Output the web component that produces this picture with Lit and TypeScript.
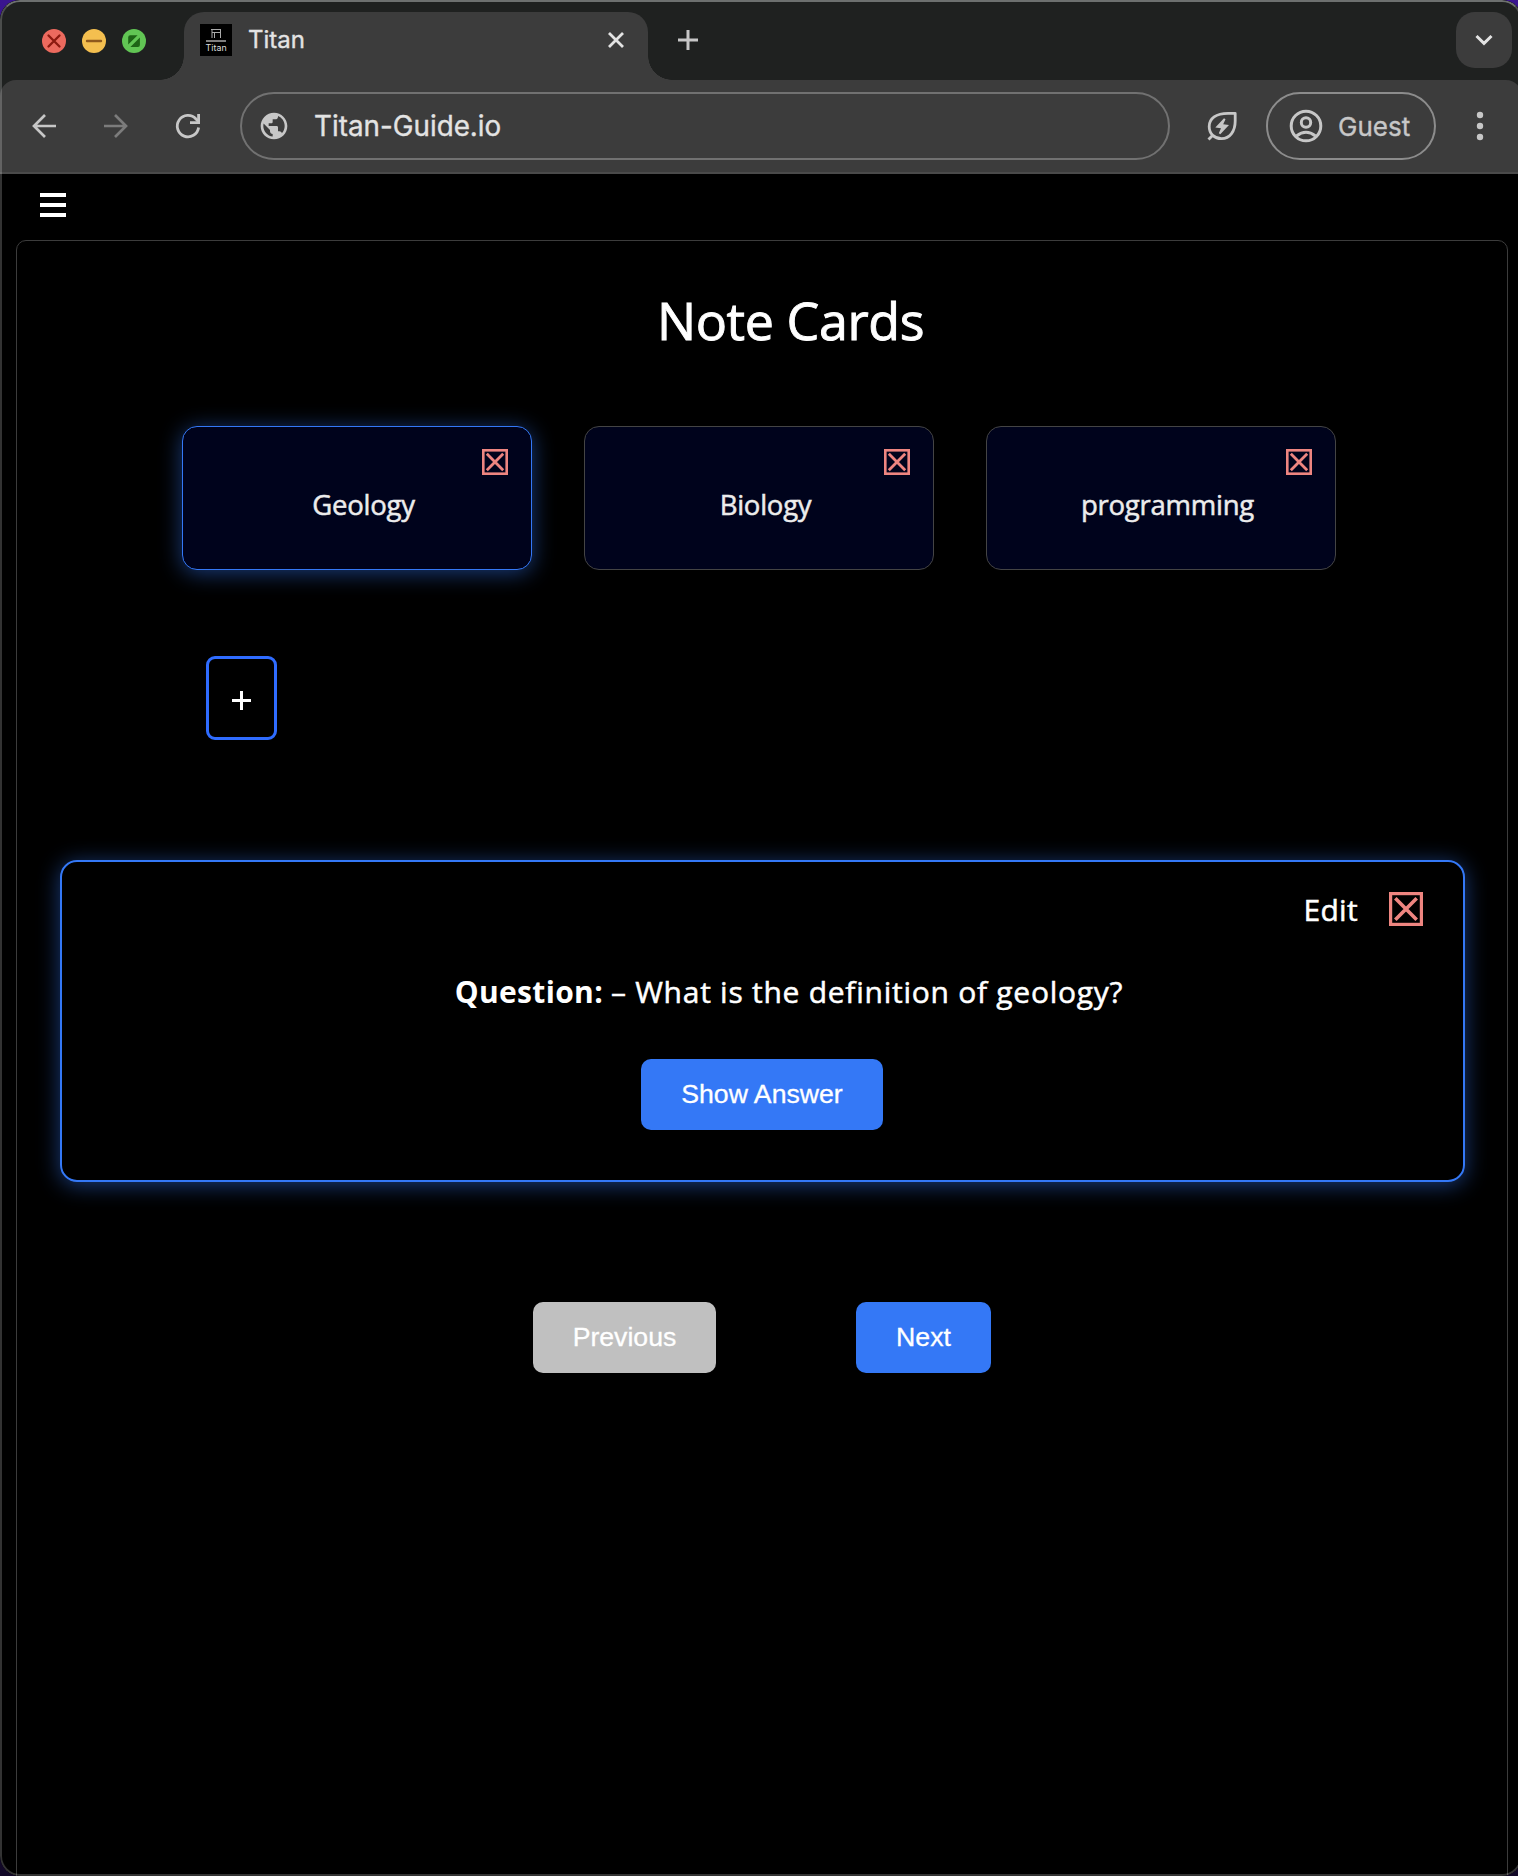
import { LitElement, html, css } from "lit";
import { customElement, property } from "lit/decorators.js";

@customElement("close-box")
class CloseBox extends LitElement {
  @property({ type: Boolean }) large = false;
  static styles = css`
    :host { display: block; line-height: 0; }
  `;
  render() {
    return this.large
      ? html`<svg width="34" height="34" viewBox="0 0 34 34" fill="none" stroke="#ee8580">
          <rect x="1.6" y="1.6" width="30.8" height="30.8" stroke-width="3.200" />
          <path d="M6.300 6.300L27.700 27.700M27.700 6.300L6.300 27.700" stroke-width="3.600" />
        </svg>`
      : html`<svg width="26" height="26" viewBox="0 0 26 26" fill="none" stroke="#ee8580">
          <rect x="1.300" y="1.300" width="23.400" height="23.400" stroke-width="2.600" />
          <path d="M4.800 4.800L21.200 21.200M21.200 4.800L4.800 21.200" stroke-width="2.800" />
        </svg>`;
  }
}

@customElement("browser-bar")
class BrowserBar extends LitElement {
  static styles = css`
    :host { display: block; background: #1f2120; font-family: Inter, "Liberation Sans", sans-serif; }
    * { box-sizing: border-box; }
    svg { display: block; flex: none; }
    .tabs { height: 80px; display: flex; align-items: flex-end; }
    .lights { width: 184px; height: 80px; padding: 29px 0 0 42px; display: flex; gap: 16px; }
    .tab {
      position: relative; width: 464px; height: 68px; background: #3c3c3c; border-radius: 20px 20px 0 0;
      display: flex; align-items: center; padding: 0 24px 12px 16px;
    }
    .tab::before, .tab::after { content: ""; position: absolute; bottom: 0; width: 24px; height: 24px; }
    .tab::before { left: -24px; background: radial-gradient(circle at 0 0, transparent 23.5px, #3c3c3c 24px); }
    .tab::after { right: -24px; background: radial-gradient(circle at 100% 0, transparent 23.5px, #3c3c3c 24px); }
    .favicon { width: 32px; height: 32px; background: #000; }
    .name { margin-left: 16px; font-size: 24px; line-height: 32px; color: #e3e3e3; flex: 1; }
    .newtab { margin: 0 0 30px 30px; }
    .search {
      width: 56px; height: 56px; margin: 0 10px 12px auto; border-radius: 19px; background: #3c3c3c;
      display: flex; align-items: center; justify-content: center;
    }
    .toolbar {
      height: 94px; background: #3c3c3c; border-bottom: 2px solid #4a4a4a; border-radius: 16px 16px 0 0;
      display: flex; align-items: center; padding: 0 38px 0 28px;
    }
    .nav { display: flex; gap: 40px; margin-top: -1px; }
    .url {
      width: 930px; height: 68px; margin-left: 36px; border: 2px solid #717171; border-radius: 34px;
      display: flex; align-items: center; padding-left: 16px; font-size: 27.800px; color: #e3e3e3; gap: 24px;
    }
    .leaf { margin-left: 36px; }
    .guest {
      width: 170px; height: 68px; margin: 0 40px 0 28px; border: 2px solid #8c8c8c; border-radius: 34px;
      display: flex; align-items: center; padding-left: 20px; gap: 14px; font-size: 26px; color: #c7c7c7;
    }
    .t { white-space: nowrap; -webkit-text-stroke: 0.35px currentColor; }
  `;
  render() {
    return html`
      <div class="tabs">
        <div class="lights">
          <svg width="24" height="24"><circle cx="12" cy="12" r="12" fill="#ec6a5e" /><path d="M6.5 6.5L17.5 17.5M17.5 6.5L6.5 17.5" stroke="#8c1a10" stroke-width="2.3" stroke-linecap="round" /></svg>
          <svg width="24" height="24"><circle cx="12" cy="12" r="12" fill="#f4bf4f" /><path d="M5 12H19" stroke="#8f591d" stroke-width="2.4" stroke-linecap="round" /></svg>
          <svg width="24" height="24"><circle cx="12" cy="12" r="12" fill="#61c554" /><path d="M6.2 15.6V8.2Q6.2 6.2 8.2 6.2H15.6ZM17.9 8.4V16Q17.9 18 15.9 18H8.4Z" fill="#1d6416" /></svg>
        </div>
        <div class="tab">
          <svg class="favicon" viewBox="0 0 32 32" fill="none">
            <path d="M11 5.5H21M12 8.5H20.5M12 6V14M20.5 6V14M14.5 8.5V14" stroke="#aaa" stroke-width="1" />
            <path d="M6 17H26" stroke="#aaa" stroke-width="1.6" />
            <text x="5.6" y="26.8" font-family="Inter, sans-serif" font-size="8.8" textLength="21" fill="#ddd">Titan</text>
          </svg>
          <div class="name t">Titan</div>
          <svg width="16" height="16"><path d="M1 1L15 15M15 1L1 15" stroke="#e3e3e3" stroke-width="2.8" /></svg>
        </div>
        <svg class="newtab" width="20" height="20"><path d="M10 0V20M0 10H20" stroke="#c7c7c7" stroke-width="3" /></svg>
        <div class="search"><svg width="18" height="12"><path d="M1.5 2L9 9.3L16.5 2" fill="none" stroke="#e3e3e3" stroke-width="3" /></svg></div>
      </div>
      <div class="toolbar">
        <div class="nav">
          <svg width="32" height="32" fill="none" stroke="#c7c7c7" stroke-width="2.7"><path d="M28 16H6M17 5L6 16L17 27" /></svg>
          <svg width="32" height="32" fill="none" stroke="#7c7c7c" stroke-width="2.7"><path d="M4 16H26M15 5L26 16L15 27" /></svg>
          <svg width="32" height="32" viewBox="0 0 32 32" fill="none" stroke="#c7c7c7" stroke-width="2.8"><path d="M26.600 17.500A10.700 10.700 0 1 1 24 9L26.500 11.500" /><path d="M18 12.600H26.600V4" /></svg>
        </div>
        <div class="url">
          <svg width="32" height="32" viewBox="0 0 24 24" fill="#c7c7c7"><path d="M12 2C6.480 2 2 6.480 2 12s4.480 10 10 10 10-4.480 10-10S17.520 2 12 2zM11 19.930C7.050 19.440 4 16.080 4 12c0-.62.08-1.210.21-1.790L9 15v1c0 1.100.9 2 2 2v1.930zm6.900-2.540c-.26-.81-1-1.390-1.900-1.390h-1v-3c0-.55-.45-1-1-1H8v-2h2c.55 0 1-.45 1-1V7h2c1.100 0 2-.9 2-2v-.41c2.930 1.190 5 4.060 5 7.410 0 2.080-.8 3.970-2.100 5.390z"/></svg>
          <span class="t">Titan-Guide.io</span>
        </div>
        <svg class="leaf" width="32" height="32" fill="none" stroke="#c7c7c7" stroke-width="2.8">
          <path d="M29.200 3.400H22C10 3.400 3.200 8.500 3.200 16.500C3.200 24 8.500 28.600 15.500 28.600C24 28.600 29.200 21 29.200 11Z" stroke-linejoin="round" />
          <path d="M2.500 29.500L7 25" />
          <path d="M18 8.300L9.300 17.600L15 18.200L12.800 23.300L14.300 24.300L23 15L17.200 14.300L19.500 9.300Z" fill="#c7c7c7" stroke="none" />
        </svg>
        <div class="guest">
          <svg width="36" height="36" fill="none" stroke="#c7c7c7" stroke-width="3"><circle cx="18" cy="18" r="14.800" /><circle cx="18" cy="14.500" r="4.700" /><path d="M8.500 28Q18 20.500 27.500 28" /></svg>
          <span class="t">Guest</span>
        </div>
        <svg width="8" height="30" fill="#c7c7c7"><circle cx="4" cy="4" r="3.200" /><circle cx="4" cy="15" r="3.200" /><circle cx="4" cy="26" r="3.200" /></svg>
      </div>
    `;
  }
}

@customElement("app-root")
class AppRoot extends LitElement {
  subjects = ["Geology", "Biology", "programming"];
  static styles = css`
    :host { display: block; width: 1518px; height: 1876px; overflow: hidden; background: linear-gradient(180deg, #3a1590 0%, #150a30 60%, #120828 100%); }
    * { box-sizing: border-box; }
    .window { position: relative; width: 1522px; height: 1876px; border-radius: 20px; overflow: hidden; background: #000; color: #fff; font-family: "Open Sans", "Noto Sans", sans-serif; display: flex; flex-direction: column; }
    .window::after { content: ""; position: absolute; inset: 0; border: 2px solid rgba(255, 255, 255, 0.2); border-top-color: #6d706f; border-radius: 20px; pointer-events: none; }
    .menu { padding: 19px 0 0 40px; height: 66px; display: flex; flex-direction: column; gap: 6px; }
    .menu i { width: 26px; height: 4px; background: #fff; }
    .panel { flex: 1; margin: 0 14px -20px 16px; border: 1px solid #3c3c3c; border-radius: 10px; display: flex; flex-direction: column; }
    h1 { margin: 43px 0 0 57px; font-size: 52px; line-height: 72px; font-weight: 400; text-align: center; letter-spacing: -0.400px; -webkit-text-stroke: 0.900px #fff; }
    .cards { display: flex; gap: 52px; margin: 70px 0 0 165px; }
    .card { width: 350px; height: 144px; background: #00031c; border: 1px solid #444; border-radius: 15px; padding: 22px 23px 0 0; color: #ececec; }
    .card.on { border-color: #3478f6; box-shadow: 0 3px 22px rgba(52, 120, 246, 0.5); }
    .card close-box { width: 26px; margin-left: auto; }
    .label { margin: 12px -23px 0 13px; text-align: center; font-size: 27.500px; line-height: 36px; letter-spacing: -0.250px; -webkit-text-stroke: 0.500px currentColor; }
    .add { width: 71px; height: 84px; margin: 86px 0 0 189px; padding-top: 5px; border: 3px solid #2f6cff; border-radius: 9px; display: flex; align-items: center; justify-content: center; }
    .quiz { width: 1405px; height: 322px; margin: 120px 0 0 43px; border: 2px solid #3478f6; border-radius: 17px; box-shadow: 0 3px 22px rgba(52, 120, 246, 0.5); display: flex; flex-direction: column; align-items: center; }
    .actions { align-self: flex-end; display: flex; align-items: center; gap: 31px; margin: 26px 40px 0 0; height: 42px; font-size: 30px; letter-spacing: 0.300px; -webkit-text-stroke: 0.500px #fff; }
    .q { margin: 42px 0 0 53px; font-size: 30px; line-height: 40px; white-space: nowrap; }
    .q b { font-weight: 700; letter-spacing: 0.350px; }
    .txt { letter-spacing: 0.740px; -webkit-text-stroke: 0.500px #fff; }
    .btn { height: 71px; border: 0; border-radius: 10px; background: #3478f6; color: #fff; font: 26.670px "Liberation Sans", Arial, sans-serif; -webkit-text-stroke: 0.300px #fff; display: flex; align-items: center; justify-content: center; padding: 0; }
    .show { width: 242px; margin: 47px 1px 0 0; }
    .pager { display: flex; gap: 140px; margin: 120px 0 0 516px; }
    .prev { width: 183px; background: #c0c0c0; }
    .next { width: 135px; }
  `;
  render() {
    return html`
      <div class="window">
        <browser-bar></browser-bar>
        <div class="menu"><i></i><i></i><i></i></div>
        <div class="panel">
          <h1>Note Cards</h1>
          <div class="cards">
            ${this.subjects.map((s, i) => html`<div class="card ${i === 0 ? "on" : ""}"><close-box></close-box><div class="label">${s}</div></div>`)}
          </div>
          <div class="add"><svg width="19" height="19"><path d="M9.500 0V19M0 9.500H19" stroke="#fff" stroke-width="3" /></svg></div>
          <div class="quiz">
            <div class="actions"><span>Edit</span><close-box large></close-box></div>
            <div class="q"><b>Question:</b> <span class="txt">– What is the definition of geology?</span></div>
            <button class="btn show">Show Answer</button>
          </div>
          <div class="pager"><button class="btn prev">Previous</button><button class="btn next">Next</button></div>
        </div>
      </div>
    `;
  }
}
